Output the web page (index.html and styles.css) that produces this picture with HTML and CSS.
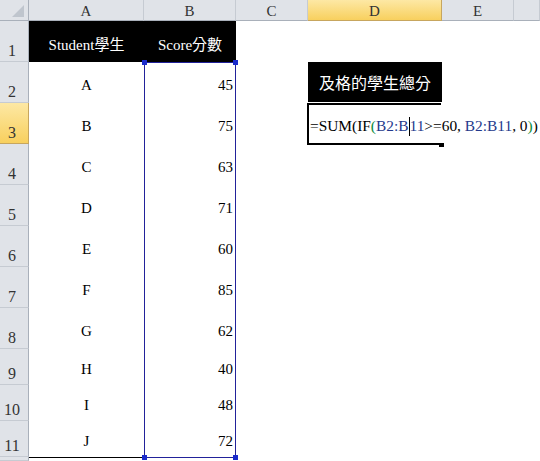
FILE: index.html
```html
<!DOCTYPE html>
<html>
<head>
<meta charset="utf-8">
<link rel="stylesheet" href="styles.css">
</head>
<body>
<div class="sheet">
  <div class="corner"></div>
  <div class="ch">A</div><div class="ch">B</div><div class="ch">C</div><div class="ch ch-sel">D</div><div class="ch">E</div><div class="ch"></div>

  <div class="rh">1</div><div class="c c-head">Student學生</div><div class="c c-head">Score分數</div><div class="c"></div><div class="c"></div><div class="c"></div><div class="c"></div>

  <div class="rh">2</div><div class="c">A</div><div class="c c-num">45</div><div class="c"></div><div class="c c-title">及格的學生總分</div><div class="c"></div><div class="c"></div>

  <div class="rh rh-sel">3</div><div class="c">B</div><div class="c c-num">75</div><div class="c"></div>
  <div class="c c-active"><span class="formula">=SUM(IF<span class="p1">(</span><span class="ref">B2:B<span class="cursor"></span>11</span>&gt;=60, <span class="ref">B2:B11</span>, 0<span class="p1">)</span>)</span></div>
  <div class="c"></div><div class="c"></div>

  <div class="rh">4</div><div class="c">C</div><div class="c c-num">63</div><div class="c"></div><div class="c"></div><div class="c"></div><div class="c"></div>
  <div class="rh">5</div><div class="c">D</div><div class="c c-num">71</div><div class="c"></div><div class="c"></div><div class="c"></div><div class="c"></div>
  <div class="rh">6</div><div class="c">E</div><div class="c c-num">60</div><div class="c"></div><div class="c"></div><div class="c"></div><div class="c"></div>
  <div class="rh">7</div><div class="c">F</div><div class="c c-num">85</div><div class="c"></div><div class="c"></div><div class="c"></div><div class="c"></div>
  <div class="rh">8</div><div class="c">G</div><div class="c c-num">62</div><div class="c"></div><div class="c"></div><div class="c"></div><div class="c"></div>
  <div class="rh">9</div><div class="c">H</div><div class="c c-num">40</div><div class="c"></div><div class="c"></div><div class="c"></div><div class="c"></div>
  <div class="rh">10</div><div class="c">I</div><div class="c c-num">48</div><div class="c"></div><div class="c"></div><div class="c"></div><div class="c"></div>
  <div class="rh">11</div><div class="c">J</div><div class="c c-num">72</div><div class="c"></div><div class="c"></div><div class="c"></div><div class="c"></div>

  <div class="rh"></div><div class="c c-bline"></div><div class="c c-bline"></div><div class="c"></div><div class="c"></div><div class="c"></div><div class="c"></div>

  <div class="sel">
    <span class="handle h-tl"></span><span class="handle h-tr"></span><span class="handle h-bl"></span><span class="handle h-br"></span>
  </div>
</div>
</body>
</html>
```

FILE: styles.css
```css
* { box-sizing: border-box; }
body { margin: 0; background: #fff; }

.sheet {
  position: relative;
  display: grid;
  grid-template-columns: 29px 115px 92px 72px 134px 72px 26px;
  grid-template-rows: 21px repeat(8, 41px) repeat(3, 36px) 4px;
  width: 540px;
  height: 461px;
  overflow: hidden;
  font-family: "Liberation Serif", "Noto Sans CJK TC", serif;
  font-size: 15px;
  color: #000;
}

.corner {
  position: relative;
  background: #e0e3e8;
  border-right: 1px solid #a9b0ba;
  border-bottom: 1px solid #a9b0ba;
}
.corner::after {
  content: "";
  position: absolute;
  right: 4px;
  bottom: 3px;
  width: 0;
  height: 0;
  border-left: 12px solid transparent;
  border-bottom: 12px solid #bfc5cd;
}

.ch {
  background: #e0e3e8;
  border-right: 1px solid #c6cbd2;
  border-bottom: 1px solid #a9b0ba;
  display: flex;
  align-items: center;
  justify-content: center;
  padding-top: 3px;
  font-size: 15px;
  color: #333;
}
.ch-sel {
  background: linear-gradient(#fde8a4, #f8d05e);
  border-right-color: #c7a65e;
  border-bottom-color: #c7a65e;
}

.rh {
  background: #e0e3e8;
  border-right: 1px solid #a9b0ba;
  border-bottom: 1px solid #c6cbd2;
  display: flex;
  align-items: flex-end;
  justify-content: center;
  padding: 0 4px 1px 0;
  font-size: 16px;
  color: #333;
}
.rh-sel {
  background: linear-gradient(#fde8a4, #f8d05e);
  border-right-color: #c7a65e;
  border-bottom-color: #c7a65e;
}

.c {
  display: flex;
  align-items: center;
  justify-content: center;
  padding-top: 5px;
  white-space: nowrap;
}
.c-num {
  justify-content: flex-end;
  padding-right: 3px;
}
.c-head {
  background: #000;
  color: #fff;
  padding-top: 3px;
}
.c-title {
  background: #000;
  color: #fff;
  margin-bottom: 1px;
  padding-top: 0;
  font-family: "Noto Sans CJK TC", sans-serif;
  font-size: 16px;
}
.c-bline {
  border-top: 1px solid #000;
}

.c-active {
  position: relative;
  z-index: 1;
  justify-content: flex-start;
  padding-left: 2px;
  overflow: visible;
}
.c-active::before {
  content: "";
  position: absolute;
  left: -1px;
  top: 0;
  width: 132px;
  bottom: -1px;
  border: 2px solid #000;
  border-right: none;
}
.c-active::after {
  content: "";
  position: absolute;
  left: 131px;
  top: 40px;
  width: 5px;
  height: 4px;
  background: #000;
}
.formula { font-size: 15.4px; }
.p1 { color: #0a8a3a; }
.ref { color: #24398c; }
.cursor {
  display: inline-block;
  width: 0;
  height: 19px;
  border-left: 1px solid #000;
  vertical-align: -5px;
}

.sel {
  position: absolute;
  left: 144px;
  top: 62px;
  width: 92px;
  height: 396px;
  border: 1px solid #22229a;
}
.handle {
  position: absolute;
  width: 5px;
  height: 5px;
  background: #1a2bcc;
}
.h-tl { left: -3px; top: -3px; }
.h-tr { right: -3px; top: -3px; }
.h-bl { left: -3px; bottom: -3px; }
.h-br { right: -3px; bottom: -3px; }
```
